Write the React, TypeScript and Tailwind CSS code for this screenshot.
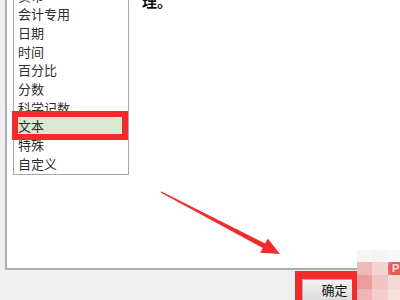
const formats = ['货币', '会计专用', '日期', '时间', '百分比', '分数', '科学记数', '文本', '特殊', '自定义']

function Mosaic() {
  // blurred watermark in the corner
  const cells = [
    ['#f6f6f6', '#f4f4f4', '#f7f7f7'],
    ['#efb9b9', '#f5d3d3', '#e97a7a'],
    ['#eb9d9d', '#f1c4c4', '#f4d8d8'],
    ['#f2b4b4', '#f3cccc', '#f6e0e0'],
  ]
  return (
    <div className="absolute left-[357px] top-[250px] grid grid-cols-[15px_16px_12px] grid-rows-[12px_13px_14px_11px]">
      {cells.flat().map((c, i) => (
        <div key={i} style={{ backgroundColor: c }} />
      ))}
      <div className="absolute left-[31px] top-[12px] flex h-[13px] w-[20px] items-center rounded-l-full bg-[#e85a5a] pl-[4px] text-[11px] font-bold leading-none text-white/80 [font-family:'Liberation_Sans',sans-serif]">
        P
      </div>
    </div>
  )
}

export default function App() {
  return (
    <div className="relative h-[300px] w-[400px] overflow-hidden bg-[#f0f0f0] text-[#2e2e2e] [font-family:'Noto_Sans_CJK_SC',sans-serif]">
      <div className="ml-[5px] flex h-[270px] border-b-2 border-l-2 border-[#acacb0] bg-white">
        <div className="-mt-[15px] ml-[6px] h-[190px] w-[116px] border border-[#a5a5ab] pl-[4px] pr-[1px]">
          {formats.map((f) => (
            <div
              key={f}
              className={`-ml-[4px] flex h-[18.7px] items-center pl-[4px] text-[13px] ${f === '文本' ? 'bg-[#d7e9cf]' : ''}`}
            >
              {f}
            </div>
          ))}
        </div>
        <div className="-mt-[8px] ml-[13px] text-[15px] font-bold leading-[18px] text-[#111]">理。</div>
      </div>

      <div className="flex h-[30px] justify-end">
        <button
          type="button"
          className="mr-[33px] mt-[9px] flex h-[24px] w-[65px] items-start justify-center border border-[#adadad] bg-gradient-to-b from-[#f2f2f2] to-[#dcdcdc] pt-[1px] text-[13px] leading-[18px] text-[#111]"
        >
          确定
        </button>
      </div>

      {/* annotations */}
      <div className="absolute left-[12px] top-[110.5px] h-[29px] w-[116px] border-[6px] border-[#f42b2b]" />
      <div className="absolute left-[295px] top-[271px] h-[40px] w-[62px] border-[7px] border-r-[5px] border-t-[8px] border-[#f42b2b]" />
      <svg className="absolute left-0 top-0" width="400" height="300" viewBox="0 0 400 300">
        <polygon
          points="161,191.3 265.2,243.5 267.7,238.6 280,254 260.3,252.8 262.8,247.9 161,192.7"
          fill="#f42b2b"
        />
      </svg>
      <Mosaic />
    </div>
  )
}
